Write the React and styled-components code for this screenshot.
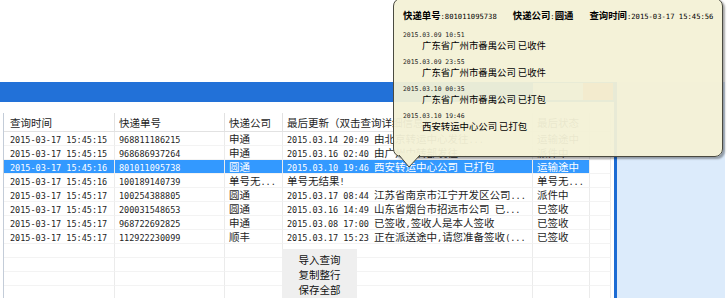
import React from 'react'
import styled, { createGlobalStyle } from 'styled-components'

const GlobalStyle = createGlobalStyle`
  html, body {
    margin: 0;
    padding: 0;
    background: #fff;
  }
  body {
    width: 728px;
    height: 298px;
    overflow: hidden;
    font-family: "Noto Sans CJK SC", sans-serif;
  }
`

const Screen = styled.div`
  position: relative;
  width: 728px;
  height: 298px;
  display: flex;
  flex-direction: column;
  background: #fff;
  overflow: hidden;
`

const TopGap = styled.div`
  height: 82px;
  flex: none;
`

const Desk = styled.div`
  display: flex;
  flex: 1;
  min-height: 0;
`

const Window = styled.div`
  width: 617px;
  flex: none;
  display: flex;
  flex-direction: column;
  border-right: 3px solid #1b6bd3;
  box-sizing: border-box;
`

const TitleBar = styled.div`
  height: 20px;
  flex: none;
  background: #2271d8;
  display: flex;
  justify-content: flex-end;
  align-items: flex-start;
  padding: 1px 1px 0 0;
  box-sizing: border-box;
`

const CaptionButtons = styled.div`
  width: 50px;
  height: 17px;
  background: #c9d2dc;
`

const CloseButton = styled.div`
  width: 30px;
  height: 17px;
  background: #e07a45;
`

const WindowBody = styled.div`
  flex: 1;
  background: #fff;
  padding: 11px 3px 0 3px;
  min-height: 0;
`

const Table = styled.div`
  display: grid;
  grid-template-columns: 111px 110px 58px 250px 57px 21px;
  border-left: 1px solid #c3ccd8;
  color: #1e1e1e;
  font-size: 10.5px;
`

const HeadCell = styled.div`
  height: 19px;
  line-height: 19px;
  padding-left: ${p => (p.$first ? 6 : 4)}px;
  border-right: 1px solid #e2e2e2;
  border-bottom: 1px solid #e2e2e2;
  box-sizing: border-box;
  white-space: nowrap;
  overflow: hidden;
`

const Cell = styled.div`
  height: 14px;
  line-height: 14px;
  padding-left: ${p => (p.$first ? 6 : 4)}px;
  border-right: 1px solid #ebebeb;
  border-bottom: 1px solid #f3f3f3;
  box-sizing: border-box;
  white-space: nowrap;
  overflow: hidden;
  background: ${p => (p.$selected ? '#3399ff' : 'transparent')};
  color: ${p => (p.$selected ? '#fff' : 'inherit')};
`

const Latin = styled.span`
  font-family: "DejaVu Sans Mono", monospace;
  font-size: ${p => p.$size}px;
`

const SidePanel = styled.div`
  width: 108px;
  flex: none;
  background: #dcebfb;
`

const Balloon = styled.div`
  position: absolute;
  left: 393px;
  top: -2px;
  width: 330px;
  height: 159px;
  box-sizing: border-box;
  border: 1px solid #4a4a40;
  border-radius: 8px;
  background: rgba(243, 241, 214, 0.95);
  box-shadow: 2px 2px 2px rgba(0, 0, 0, 0.35);
  padding: 9px 0 0 9px;
  color: #000;
  font-size: 9.4px;
  display: flex;
  flex-direction: column;
  gap: 5.5px;
  z-index: 5;
`

const Tail = styled.svg`
  position: absolute;
  left: 4px;
  top: 156px;
  overflow: visible;
`

const BalloonHead = styled.div`
  display: flex;
  gap: 16px;
  line-height: 14px;
  white-space: nowrap;
`

const Label = styled.b`
  font-weight: 700;
`

const Trace = styled.div`
  display: flex;
  flex-direction: column;
  gap: 7px;
`

const TraceItem = styled.div`
  display: flex;
  flex-direction: column;
  line-height: 10px;
`

const TraceDate = styled(Latin)`
  color: #222;
`

const TraceText = styled.div`
  padding-left: 19px;
  white-space: nowrap;
`

const Menu = styled.div`
  position: absolute;
  left: 282px;
  top: 249px;
  width: 75px;
  height: 60px;
  padding-top: 3px;
  box-sizing: border-box;
  background: #efefef;
  display: flex;
  flex-direction: column;
  align-items: center;
  font-size: 10.5px;
  color: #111;
  z-index: 4;
`

const MenuItem = styled.div`
  line-height: 15px;
`

const Mixed = ({ text, size }) =>
  text
    .split(/([\x20-\x7e]+)/)
    .filter(Boolean)
    .map((part, i) =>
      /^[\x20-\x7e]+$/.test(part) ? (
        <Latin key={i} $size={size}>{part}</Latin>
      ) : (
        <span key={i}>{part}</span>
      )
    )

const headers = ['查询时间', '快递单号', '快递公司', '最后更新（双击查询详细信息）', '最后状态', '']

const rows = [
  ['2015-03-17 15:45:15', '968811186215', '申通', '2015.03.14 20:49 由北京转运中心发往...', '运输途中'],
  ['2015-03-17 15:45:15', '968686937264', '申通', '2015.03.16 02:40 由广州中转部发往...', '派件中'],
  ['2015-03-17 15:45:16', '801011095738', '圆通', '2015.03.10 19:46 西安转运中心公司 已打包', '运输途中'],
  ['2015-03-17 15:45:16', '100189140739', '单号无...', '单号无结果!', '单号无...'],
  ['2015-03-17 15:45:17', '100254388805', '圆通', '2015.03.17 08:44 江苏省南京市江宁开发区公司...', '派件中'],
  ['2015-03-17 15:45:17', '200031548653', '圆通', '2015.03.16 14:49 山东省烟台市招远市公司 已...', '已签收'],
  ['2015-03-17 15:45:17', '968722692825', '申通', '2015.03.08 17:00 已签收,签收人是本人签收', '已签收'],
  ['2015-03-17 15:45:17', '112922230099', '顺丰', '2015.03.17 15:23 正在派送途中,请您准备签收(...', '已签收'],
  ['', '', '', '', ''],
  ['', '', '', '', ''],
  ['', '', '', '', ''],
  ['', '', '', '', ''],
]

const SELECTED = 2

const trace = [
  ['2015.03.09 10:51', '广东省广州市番禺公司 已收件'],
  ['2015.03.09 23:55', '广东省广州市番禺公司 已收件'],
  ['2015.03.10 00:35', '广东省广州市番禺公司 已打包'],
  ['2015.03.10 19:46', '西安转运中心公司 已打包'],
]

const App = () => (
  <>
    <GlobalStyle />
    <Screen>
      <TopGap />
      <Desk>
        <Window>
          <TitleBar>
            <CaptionButtons />
            <CloseButton />
          </TitleBar>
          <WindowBody>
            <Table>
              {headers.map((h, i) => (
                <HeadCell key={i} $first={i === 0}>{h}</HeadCell>
              ))}
              {rows.map((row, r) => (
                <React.Fragment key={r}>
                  {row.map((c, i) => (
                    <Cell key={i} $first={i === 0} $selected={r === SELECTED}>
                      <Mixed text={c} size={8.5} />
                    </Cell>
                  ))}
                  <Cell />
                </React.Fragment>
              ))}
            </Table>
          </WindowBody>
        </Window>
        <SidePanel />
      </Desk>

      <Balloon>
        <BalloonHead>
          <span><Label>快递单号</Label><Latin $size={7.2}>:801011095738</Latin></span>
          <span><Label>快递公司</Label><Latin $size={7.2}>:</Latin><Label>圆通</Label></span>
          <span><Label>查询时间</Label><Latin $size={7.2}>:2015-03-17 15:45:56</Latin></span>
        </BalloonHead>
        <Trace>
          {trace.map(([d, t]) => (
            <TraceItem key={d}>
              <TraceDate $size={6.4}>{d}</TraceDate>
              <TraceText>{t}</TraceText>
            </TraceItem>
          ))}
        </Trace>
        <Tail width="24" height="16" viewBox="0 0 24 16">
          <path d="M1 0 Q6 6 11 12 L22 0 Z" fill="rgb(243,241,214)" />
          <path d="M1 0 Q6 6 11 12 L22 0" fill="none" stroke="#4a4a40" strokeWidth="1" />
          <path d="M2 -1 L21 -1" stroke="rgb(243,241,214)" strokeWidth="2" />
        </Tail>
      </Balloon>

      <Menu>
        <MenuItem>导入查询</MenuItem>
        <MenuItem>复制整行</MenuItem>
        <MenuItem>保存全部</MenuItem>
      </Menu>
    </Screen>
  </>
)

export default App
